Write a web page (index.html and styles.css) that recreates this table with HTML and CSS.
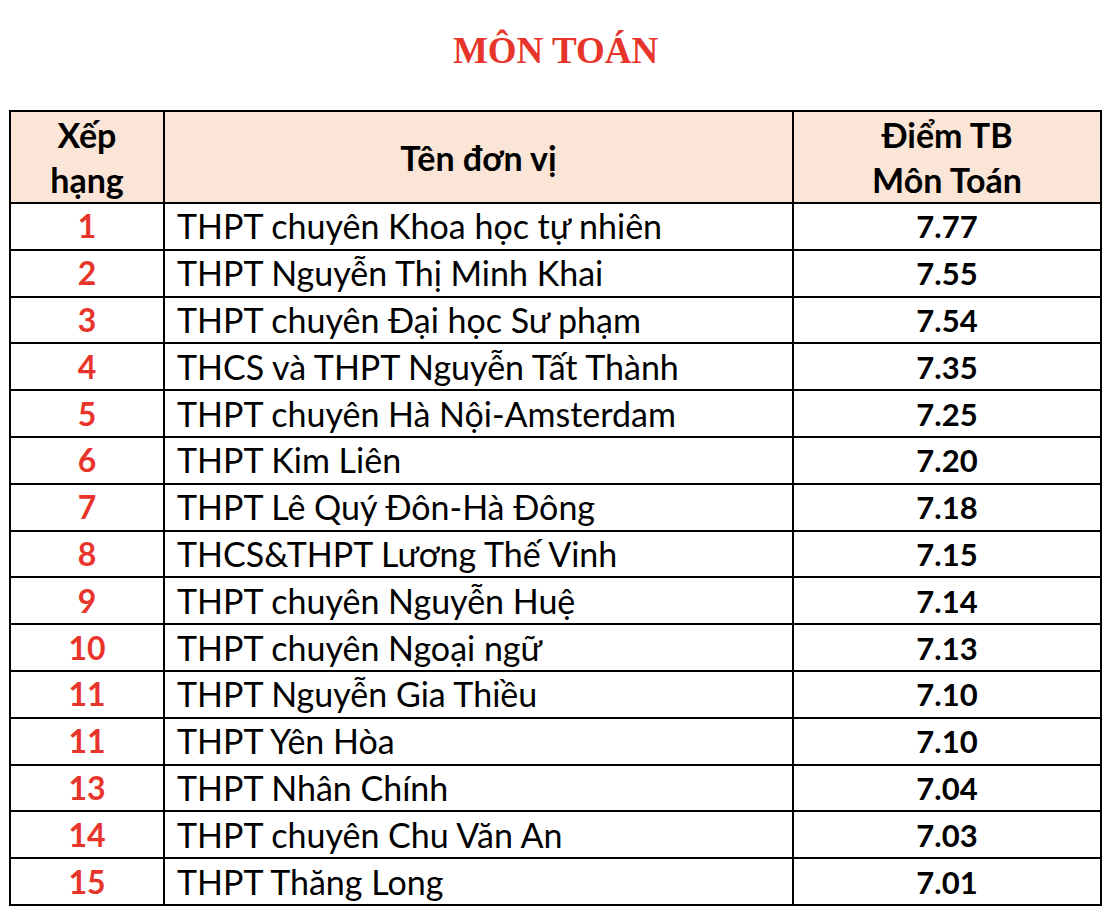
FILE: index.html
```html
<!DOCTYPE html>
<html lang="vi">
<head>
<meta charset="utf-8">
<link rel="stylesheet" href="styles.css">
</head>
<body>
<div class="page">
  <h1 class="title">MÔN TOÁN</h1>
  <table class="rank">
    <thead>
      <tr>
        <th class="c-rank">Xếp<br>hạng</th>
        <th class="c-name">Tên đơn vị</th>
        <th class="c-score">Điểm TB<br>Môn Toán</th>
      </tr>
    </thead>
    <tbody>
      <tr><td class="c-rank">1</td><td class="c-name">THPT chuyên Khoa học tự nhiên</td><td class="c-score">7.77</td></tr>
      <tr><td class="c-rank">2</td><td class="c-name">THPT Nguyễn Thị Minh Khai</td><td class="c-score">7.55</td></tr>
      <tr><td class="c-rank">3</td><td class="c-name">THPT chuyên Đại học Sư phạm</td><td class="c-score">7.54</td></tr>
      <tr><td class="c-rank">4</td><td class="c-name">THCS và THPT Nguyễn Tất Thành</td><td class="c-score">7.35</td></tr>
      <tr><td class="c-rank">5</td><td class="c-name">THPT chuyên Hà Nội-Amsterdam</td><td class="c-score">7.25</td></tr>
      <tr><td class="c-rank">6</td><td class="c-name">THPT Kim Liên</td><td class="c-score">7.20</td></tr>
      <tr><td class="c-rank">7</td><td class="c-name">THPT Lê Quý Đôn-Hà Đông</td><td class="c-score">7.18</td></tr>
      <tr><td class="c-rank">8</td><td class="c-name">THCS&amp;THPT Lương Thế Vinh</td><td class="c-score">7.15</td></tr>
      <tr><td class="c-rank">9</td><td class="c-name">THPT chuyên Nguyễn Huệ</td><td class="c-score">7.14</td></tr>
      <tr><td class="c-rank">10</td><td class="c-name">THPT chuyên Ngoại ngữ</td><td class="c-score">7.13</td></tr>
      <tr><td class="c-rank">11</td><td class="c-name">THPT Nguyễn Gia Thiều</td><td class="c-score">7.10</td></tr>
      <tr><td class="c-rank">11</td><td class="c-name">THPT Yên Hòa</td><td class="c-score">7.10</td></tr>
      <tr><td class="c-rank">13</td><td class="c-name">THPT Nhân Chính</td><td class="c-score">7.04</td></tr>
      <tr><td class="c-rank">14</td><td class="c-name">THPT chuyên Chu Văn An</td><td class="c-score">7.03</td></tr>
      <tr><td class="c-rank">15</td><td class="c-name">THPT Thăng Long</td><td class="c-score">7.01</td></tr>
    </tbody>
  </table>
</div>
</body>
</html>
```
FILE: styles.css
```css
html, body {
  margin: 0;
  padding: 0;
  background: #ffffff;
}
.page {
  padding: 0 8px 0 9px;
}
.title {
  margin: 0;
  height: 110px;
  box-sizing: border-box;
  padding-top: 31px;
  text-align: center;
  font-family: "Liberation Serif", "Times New Roman", serif;
  font-weight: bold;
  font-size: 37px;
  line-height: 40px;
  color: #e8352b;
}
.rank {
  width: 1093px;
  border-collapse: collapse;
  border: 2.5px solid #000;
  font-family: Lato, "Noto Sans", sans-serif;
  font-size: 34px;
  color: #000;
}
.rank th, .rank td {
  border: 2px solid #000;
  padding: 0;
}
.rank th {
  background: #fbe5d6;
  font-weight: bold;
  height: 89px;
  line-height: 45px;
  text-align: center;
}
.rank td {
  height: 44.8px;
  line-height: 44px;
}
.c-rank {
  width: 152px;
}
.c-score {
  width: 306px;
}
td.c-rank {
  text-align: center;
  color: #e8352b;
  font-weight: bold;
  font-size: 32px;
}
td.c-name {
  padding-left: 12px;
}
td.c-score {
  text-align: center;
  font-weight: bold;
  font-size: 31px;
}
```
